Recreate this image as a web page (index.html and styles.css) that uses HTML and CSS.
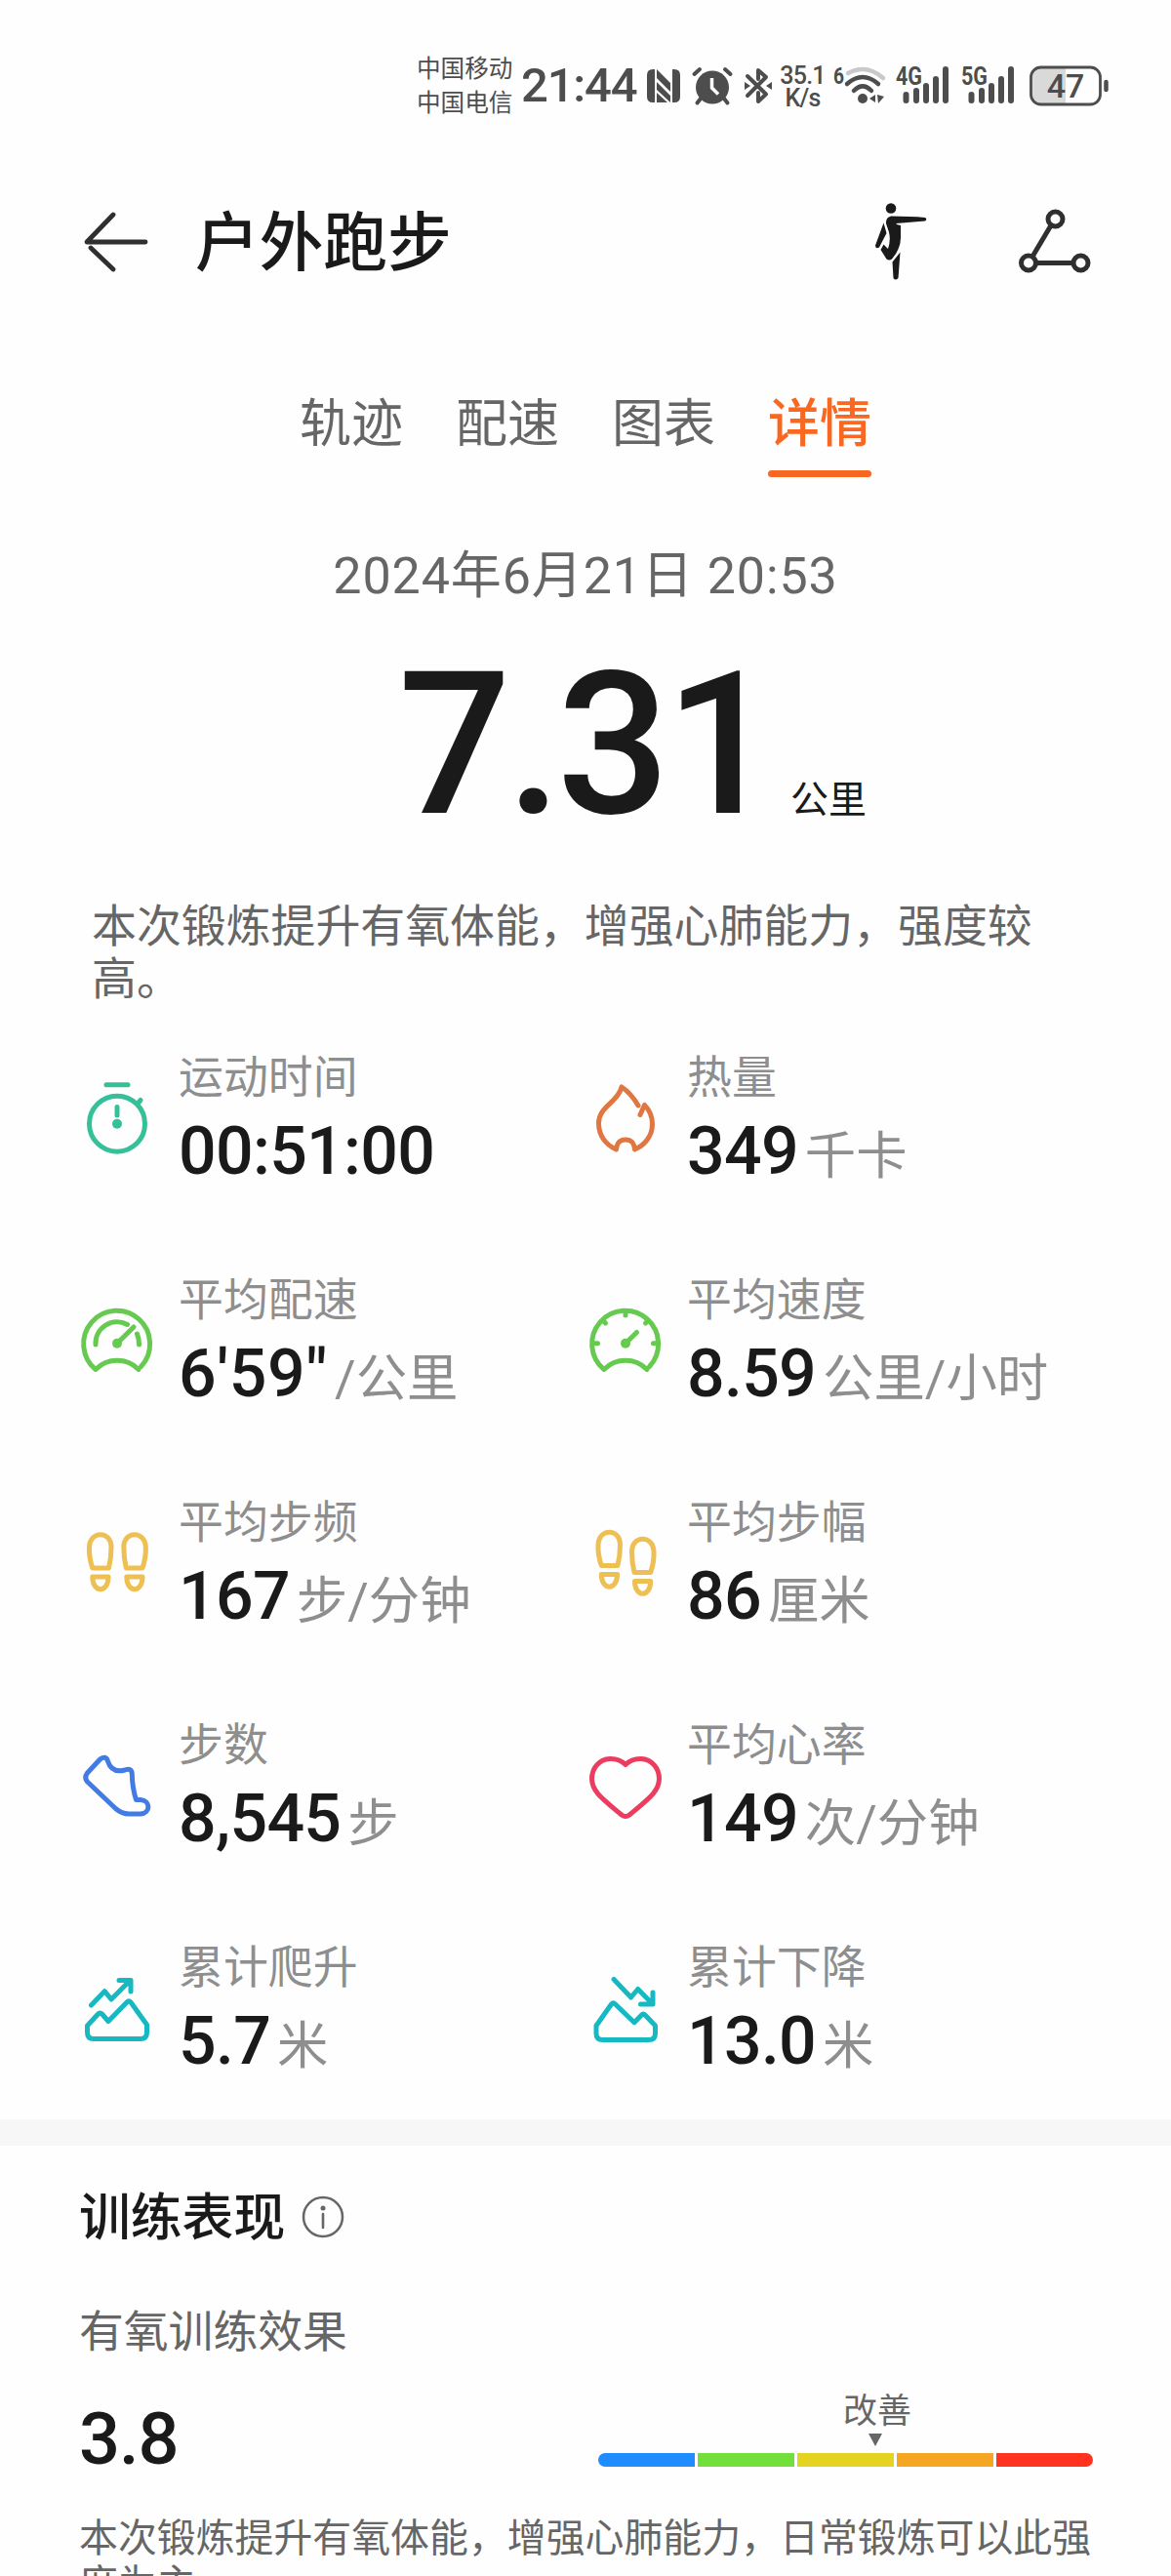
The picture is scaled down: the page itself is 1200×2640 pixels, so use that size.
FILE: index.html
```html
<!DOCTYPE html>
<html lang="zh-CN">
<head>
    <meta charset="UTF-8">
    <meta name="viewport" content="width=device-width, initial-scale=1.0">
    <title>户外跑步</title>
    <link rel="stylesheet" href="styles.css">
</head>
<body>
    <!-- 状态栏 -->
    <div class="status-bar">
        <div class="carriers">
            <span>中国移动</span>
            <span>中国电信</span>
        </div>
        <span class="status-time">21:44</span>
        <svg class="nfc" width="36" height="36" viewBox="0 0 36 36">
            <path d="M7 1 H9 V35 H7 Q1 35 1 29 V7 Q1 1 7 1Z M29 1 Q35 1 35 7 V29 Q35 35 29 35 H27 V1Z" fill="#4d4d4d"/>
            <path d="M11 1 L25 15 V24 L11 10Z M11 14 L25 28 V35 L11 22Z M11 25 L22 35 H11Z" fill="#4d4d4d"/>
        </svg>
        <svg class="alarm" width="42" height="40" viewBox="0 0 42 40">
            <circle cx="21" cy="21.5" r="17" fill="#4d4d4d"/>
            <path d="M2.5 8 L8 3 M39.5 8 L34 3 M9 33 L5.5 37.5 M33 33 L36.5 37.5" stroke="#4d4d4d" stroke-width="4" stroke-linecap="round"/>
            <path d="M20.5 12 V22 L27 28.5" fill="none" stroke="#fff" stroke-width="3.5"/>
        </svg>
        <svg class="bluetooth" width="28" height="40" viewBox="0 0 28 40">
            <path d="M3 10 L22 28.5 L14 36 V27 M14 13 V4 L22 11 L3 30" fill="none" stroke="#4d4d4d" stroke-width="4" stroke-linejoin="round" stroke-linecap="round"/>
            <path d="M0 16 L6 20 L0 24Z M28 16 L22 20 L28 24Z" fill="#4d4d4d"/>
        </svg>
        <div class="net-speed">
            <span>35.1</span>
            <span>K/s</span>
        </div>
        <svg class="wifi" width="56" height="42" viewBox="0 0 56 42">
            <text x="0" y="19" font-size="23" font-weight="700" textLength="11" lengthAdjust="spacingAndGlyphs">6</text>
            <g fill="none" stroke-width="4.5" stroke-linecap="round">
                <path d="M15 8 Q34 -2 51 13" stroke="#c9c9c9"/>
                <path d="M14 19 Q30 5 46 19" stroke="#4d4d4d"/>
                <path d="M21 26 Q30 17 39 26" stroke="#4d4d4d"/>
            </g>
            <circle cx="30" cy="34" r="5" fill="#4d4d4d"/>
            <path d="M37 34 L43 30 V38Z M45 30 L52 32 L46 39Z" fill="#4d4d4d"/>
        </svg>
        <svg class="signal" width="56" height="42" viewBox="0 0 56 42">
            <text x="0" y="20" font-size="25" font-weight="700" textLength="27" lengthAdjust="spacingAndGlyphs">4G</text>
            <path d="M10.5 30 V36 M21 26 V36 M31 21 V36 M41 14 V36 M51 4 V36" stroke="#4d4d4d" stroke-width="6" stroke-linecap="round"/>
        </svg>
        <svg class="signal" width="56" height="42" viewBox="0 0 56 42">
            <text x="0" y="20" font-size="25" font-weight="700" textLength="27" lengthAdjust="spacingAndGlyphs">5G</text>
            <path d="M10.5 30 V36 M21 26 V36 M31 21 V36 M41 14 V36 M51 4 V36" stroke="#4d4d4d" stroke-width="6" stroke-linecap="round"/>
        </svg>
        <svg class="battery" width="82" height="42" viewBox="0 0 82 42">
            <path d="M37 1 H13 Q1 1 1 13 V29 Q1 41 13 41 H37Z" fill="#d9d9d9"/>
            <rect x="1.5" y="2" width="71" height="38" rx="10" fill="none" stroke="#4d4d4d" stroke-width="2.8"/>
            <path d="M78.5 17 V25" stroke="#4d4d4d" stroke-width="4.5" stroke-linecap="round"/>
            <text x="37" y="33" font-size="34" font-weight="500" text-anchor="middle">47</text>
        </svg>
    </div>

    <!-- 标题栏 -->
    <header>
        <svg class="back" width="70" height="64" viewBox="0 0 70 64">
            <path d="M64 32 H4 L31 4 M8 38 L31 60" fill="none" stroke="#2f2f2f" stroke-width="4.8" stroke-linecap="round" stroke-linejoin="round"/>
        </svg>
        <h1>户外跑步</h1>
        <svg class="stretch" width="54" height="82" viewBox="0 0 54 82">
            <circle cx="16" cy="6.5" r="5.3" fill="#1a1a1a"/>
            <path d="M16 14.5 Q36 14.5 51 16 Q53.5 17.5 51 19.5 L21 22 Q22 23.5 26 24 V37 Q26 48 17 58.5 Q14 60.5 11.5 58.5 L5.5 49 L8.5 43.5 L13 48 Q16 39 14 31 L11 22 Q10.5 16 16 14.5Z" fill="#1a1a1a"/>
            <path d="M8.5 21.5 L11.5 32 L4 46.5 Q0 48.5 0 44.5Z M17.5 61.5 L25.5 51.5 L23.5 78 Q20.5 81 18.5 78Z" fill="#1a1a1a"/>
        </svg>
        <svg class="route" width="76" height="68" viewBox="0 0 76 68">
            <g fill="none" stroke="#2f2f2f" stroke-width="5">
                <circle cx="38.5" cy="11.5" r="7.5"/>
                <circle cx="11" cy="56.5" r="7.5"/>
                <circle cx="64.5" cy="56.5" r="7.5"/>
                <path d="M34 18 L15 50 M19 56.5 H57"/>
            </g>
        </svg>
    </header>

    <!-- 标签页 -->
    <nav>
        <a>轨迹</a>
        <a>配速</a>
        <a>图表</a>
        <a class="active">详情</a>
    </nav>

    <p class="date">2024年6月21日 20:53</p>
    <div class="distance">
        <span class="distance-value">7.31</span>
        <span class="distance-unit">公里</span>
    </div>
    <p class="summary">本次锻炼提升有氧体能，增强心肺能力，强度较高。</p>

    <!-- 运动数据 -->
    <main class="metrics">
        <div class="metric">
            <svg class="icon teal" viewBox="0 0 80 80">
                <path d="M29 4.7 H51 M61 24 L64 20.5 M40 27.5 V36"/>
                <circle cx="40" cy="44.7" r="28.5"/>
                <circle class="dot" cx="40" cy="44.7" r="5"/>
            </svg>
            <div>
                <p class="label">运动时间</p>
                <p class="value">00:51:00</p>
            </div>
        </div>
        <div class="metric">
            <svg class="icon orange" viewBox="0 0 80 80">
                <path d="M53 26 C49 19 43 11.5 36 7 C32 23 12.5 27 12.5 44 C12.5 57 20 66.5 30.5 71 C31 67 32 61 40 61 C48 61 49 67 49.5 71 C60 66.5 67.5 57 67.5 45 C67.5 36 63 29 59.5 25.5 L55 35.5"/>
            </svg>
            <div>
                <p class="label">热量</p>
                <p class="value">349<small>千卡</small></p>
            </div>
        </div>
        <div class="metric">
            <svg class="icon green" viewBox="0 0 80 80">
                <path d="M64.5 65.5 A34 34 0 1 0 18 68.5 A31 31 0 0 1 62 68.5"/>
                <path d="M18 43 A22 22 0 0 1 50.5 22.5 M62.5 43 Q62.5 37 60.5 32 M40 41.7 L57 25"/>
                <circle class="dot" cx="40" cy="41.7" r="5"/>
            </svg>
            <div>
                <p class="label">平均配速</p>
                <p class="value pace">6'59"<small>/公里</small></p>
            </div>
        </div>
        <div class="metric">
            <svg class="icon green" viewBox="0 0 80 80">
                <path d="M64.5 65.5 A34 34 0 1 0 18 68.5 A31 31 0 0 1 62 68.5"/>
                <path d="M40 9 V13 M8 41.7 H11.5 M72 41.7 H68.5 M17 18.5 L19.5 21 M63 18.5 L60.5 21 M40 41.7 L51.5 30.5"/>
                <circle class="dot" cx="40" cy="41.7" r="5"/>
            </svg>
            <div>
                <p class="label">平均速度</p>
                <p class="value">8.59<small>公里/小时</small></p>
            </div>
        </div>
        <div class="metric">
            <svg class="icon yellow" viewBox="0 0 80 80">
                <path id="foot" d="M14.8 44 C11 33 11.2 28 11.5 22 C12.5 5.5 33.5 5.5 34 22 C34 30 33.5 36 31.500 44Z M14.8 53 H31 C31 70 14.8 70 14.8 53Z"/>
                <use href="#foot" transform="translate(80.8 0) scale(-1 1)"/>
            </svg>
            <div>
                <p class="label">平均步频</p>
                <p class="value">167<small>步/分钟</small></p>
            </div>
        </div>
        <div class="metric">
            <svg class="icon yellow" viewBox="0 0 80 80">
                <use href="#foot" transform="translate(.5 -2.5)"/>
                <use href="#foot" transform="translate(80.5 4.5) scale(-1 1)"/>
            </svg>
            <div>
                <p class="label">平均步幅</p>
                <p class="value">86<small>厘米</small></p>
            </div>
        </div>
        <div class="metric">
            <svg class="icon blue" viewBox="0 0 80 80">
                <path d="M22.5 12 Q28.5 7.5 30.5 14 Q34.5 26.5 48 23 Q55 20.5 55.3 27 Q55.5 41 59.5 53.5 H64 C74.5 54 74.5 67.5 64 68 H52 Q45 68 38.5 62.5 L9.5 35 Q6 30.5 9.5 26Z"/>
            </svg>
            <div>
                <p class="label">步数</p>
                <p class="value">8,545<small>步</small></p>
            </div>
        </div>
        <div class="metric">
            <svg class="icon red" viewBox="0 0 80 80">
                <path d="M40 17.5 C35 12.5 29 11.3 24 11.5 C13 12 5.5 21 5.5 32 C5.5 45 17 53 36 69 Q40 72 44 69 C63 53 74.5 45 74.5 32 C74.5 21 67 12 56 11.5 C51 11.3 45 12.5 40 17.5Z"/>
            </svg>
            <div>
                <p class="label">平均心率</p>
                <p class="value">149<small>次/分钟</small></p>
            </div>
        </div>
        <div class="metric">
            <svg class="icon cyan" viewBox="0 0 80 80">
                <path d="M13.5 36 L27.2 21.7 L34 30 L53 11 M42 10.5 H54 V22"/>
                <path d="M9.5 57 L20.5 45 Q22.5 43 24.5 45 L31 52.5 L50 33 Q52 31 54 33 L70.5 56 V64 Q70.5 70.5 64 70.5 H16 Q9.5 70.5 9.5 64Z"/>
            </svg>
            <div>
                <p class="label">累计爬升</p>
                <p class="value">5.7<small>米</small></p>
            </div>
        </div>
        <div class="metric">
            <svg class="icon cyan" viewBox="0 0 80 80">
                <path d="M28 9.5 L45.6 28 L52.7 19.5 L67 34 M55.5 35 H68 V23"/>
                <path d="M10 57 L25.5 35 Q27.5 32.5 29.5 35 L49 53.7 L56.5 46 Q58.3 44 60 46 L70.5 57 V65 Q70.5 71.5 64 71.5 H16.5 Q10 71.5 10 65Z"/>
            </svg>
            <div>
                <p class="label">累计下降</p>
                <p class="value">13.0<small>米</small></p>
            </div>
        </div>
    </main>

    <!-- 训练表现 -->
    <section class="training">
        <h2>训练表现
            <svg width="44" height="44" viewBox="0 0 44 44">
                <circle cx="22" cy="22" r="20" fill="none" stroke="#666" stroke-width="2.5"/>
                <circle cx="22" cy="13" r="2.5" fill="#666"/>
                <path d="M22 19 V33" stroke="#666" stroke-width="2.6" stroke-linecap="round"/>
            </svg>
        </h2>
        <h3>有氧训练效果</h3>
        <div class="effect">
            <span class="effect-value">3.8</span>
            <div class="scale">
                <div class="marker">改善</div>
                <div class="scale-bar">
                    <i class="s1"></i><i class="s2"></i><i class="s3"></i><i class="s4"></i><i class="s5"></i>
                </div>
            </div>
        </div>
        <p class="advice">本次锻炼提升有氧体能，增强心肺能力，日常锻炼可以此强度为主。</p>
    </section>
</body>
</html>
```
FILE: styles.css
```css
/* 全局 */
* {
    box-sizing: border-box;
}

body {
    margin: 0;
    height: 2640px;
    overflow: hidden;
    font-family: Roboto, "Noto Sans CJK SC", sans-serif;
    background-color: #fefefe;
    color: #1a1a1a;
}

h1, h2, h3, p {
    margin: 0;
    font-weight: 400;
}

svg {
    flex: none;
    overflow: visible;
}

/* 状态栏 */
.status-bar {
    display: flex;
    align-items: center;
    height: 140px;
    padding: 36px 0 0 427px;
    color: #4d4d4d;
}

.status-bar text {
    fill: #4d4d4d;
}

.carriers {
    display: flex;
    flex-direction: column;
    width: 107px;
    font-size: 24.6px;
    line-height: 35.5px;
}

.status-time {
    width: 128px;
    font-size: 49px;
    font-weight: 500;
    letter-spacing: -1.2px;
    line-height: 60px;
}

.alarm {
    margin-left: 11px;
}

.bluetooth {
    margin-left: 12px;
}

.net-speed {
    display: flex;
    flex-direction: column;
    align-items: center;
    width: 49px;
    margin: 2px 7px 0 7px;
    font-size: 25px;
    font-weight: 500;
    letter-spacing: -0.8px;
    line-height: 23px;
}

.signal {
    margin-left: 8px;
    margin-right: 3px;
}

.battery {
    margin-left: 11px;
}

/* 标题栏 */
header {
    display: flex;
    align-items: center;
    height: 220px;
    padding: 0 81px 0 85px;
}

.back {
    margin: -5px 45px 0 0;
}

h1 {
    flex: 1;
    font-size: 65.7px;
    font-weight: 500;
    line-height: 80px;
}

.stretch {
    margin-right: 92px;
    margin-top: -4px;
}

.route {
    margin-top: -6px;
}

/* 标签页 */
nav {
    display: flex;
    justify-content: center;
    gap: 54px;
    margin-top: 45px;
}

nav a {
    padding-bottom: 17px;
    border-bottom: 7px solid transparent;
    font-size: 53px;
    line-height: 60px;
    color: #666;
}

nav a.active {
    font-weight: 500;
    color: #f86822;
    border-bottom: none;
}

nav a.active::after {
    content: "";
    display: block;
    height: 7px;
    margin: 17px 0 -24px;
    border-radius: 4px;
    background-color: #f86822;
}

/* 日期和距离 */
.date {
    margin-top: 72px;
    font-size: 52px;
    letter-spacing: 0.9px;
    line-height: 60px;
    text-align: center;
    color: #666;
}

.distance {
    display: flex;
    align-items: baseline;
    height: 200px;
    margin-top: 43px;
    padding-left: 408px;
}

.distance-value {
    width: 402px;
    font-size: 204px;
    font-weight: 500;
    letter-spacing: -5px;
    line-height: 200px;
}

.distance-unit {
    font-size: 39px;
}

.summary {
    width: 980px;
    margin: 58px 0 0 94px;
    font-size: 45.9px;
    line-height: 54px;
    color: #666;
}

/* 运动数据 */
.metrics {
    display: grid;
    grid-template-columns: 521px 1fr;
    grid-auto-rows: 146px;
    row-gap: 82px;
    margin: 44px 0 40px;
    padding-left: 80px;
}

.metric {
    display: flex;
    gap: 23px;
}

.icon {
    width: 80px;
    height: 80px;
    margin-top: 33px;
    fill: none;
    stroke: currentColor;
    stroke-width: 5px;
    stroke-linecap: round;
    stroke-linejoin: round;
}

.icon .dot {
    fill: currentColor;
    stroke: none;
}

.teal { color: #35c09a; }
.orange { color: #e07642; }
.green { color: #67ca50; }
.yellow { color: #eebf52; }
.blue { color: #427ce3; }
.red { color: #ea3d60; }
.cyan { color: #16b9c2; }

.label {
    font-size: 45.9px;
    line-height: 60px;
    color: #8e8e8e;
}

.value {
    margin-top: 6px;
    font-size: 68px;
    font-weight: 500;
    letter-spacing: -0.7px;
    line-height: 80px;
    white-space: nowrap;
}

.value small {
    margin-left: 7px;
    font-size: 52.4px;
    font-weight: 400;
    letter-spacing: 0;
    color: #8e8e8e;
}

.value.pace {
    letter-spacing: 0.8px;
}

/* 训练表现 */
.training {
    padding: 44px 80px 0 81px;
    border-top: 27px solid #f7f7f7;
}

h2 {
    display: flex;
    align-items: center;
    gap: 17px;
    font-size: 52.8px;
    font-weight: 500;
    line-height: 60px;
}

h2 svg {
    margin-top: -3px;
}

h3 {
    margin-top: 58px;
    font-size: 45.8px;
    line-height: 60px;
    color: #666;
}

.effect {
    display: flex;
    justify-content: space-between;
    height: 88px;
    margin-top: 31px;
}

.effect-value {
    margin-top: 8px;
    font-size: 74px;
    font-weight: 500;
    letter-spacing: -1px;
    line-height: 80px;
}

.scale {
    width: 507px;
}

.marker {
    width: 71px;
    margin-left: 251px;
    font-size: 35px;
    line-height: 40px;
    color: #666;
}

.marker::after {
    content: "";
    display: block;
    width: 0;
    margin: 2px 0 0 26px;
    border: 7px solid transparent;
    border-top: 13px solid #666;
    border-bottom: none;
}

.scale-bar {
    display: flex;
    gap: 3px;
    height: 14px;
    margin-top: 7px;
    border-radius: 7px;
    overflow: hidden;
}

.scale-bar i {
    flex: 1;
}

.s1 { background-color: #1f8cff; }
.s2 { background-color: #73df3b; }
.s3 { background-color: #e4d321; }
.s4 { background-color: #f5a623; }
.s5 { background-color: #ff3320; }

.advice {
    width: 1042px;
    margin-top: 38px;
    font-size: 39.9px;
    line-height: 47px;
    color: #666;
}
```
